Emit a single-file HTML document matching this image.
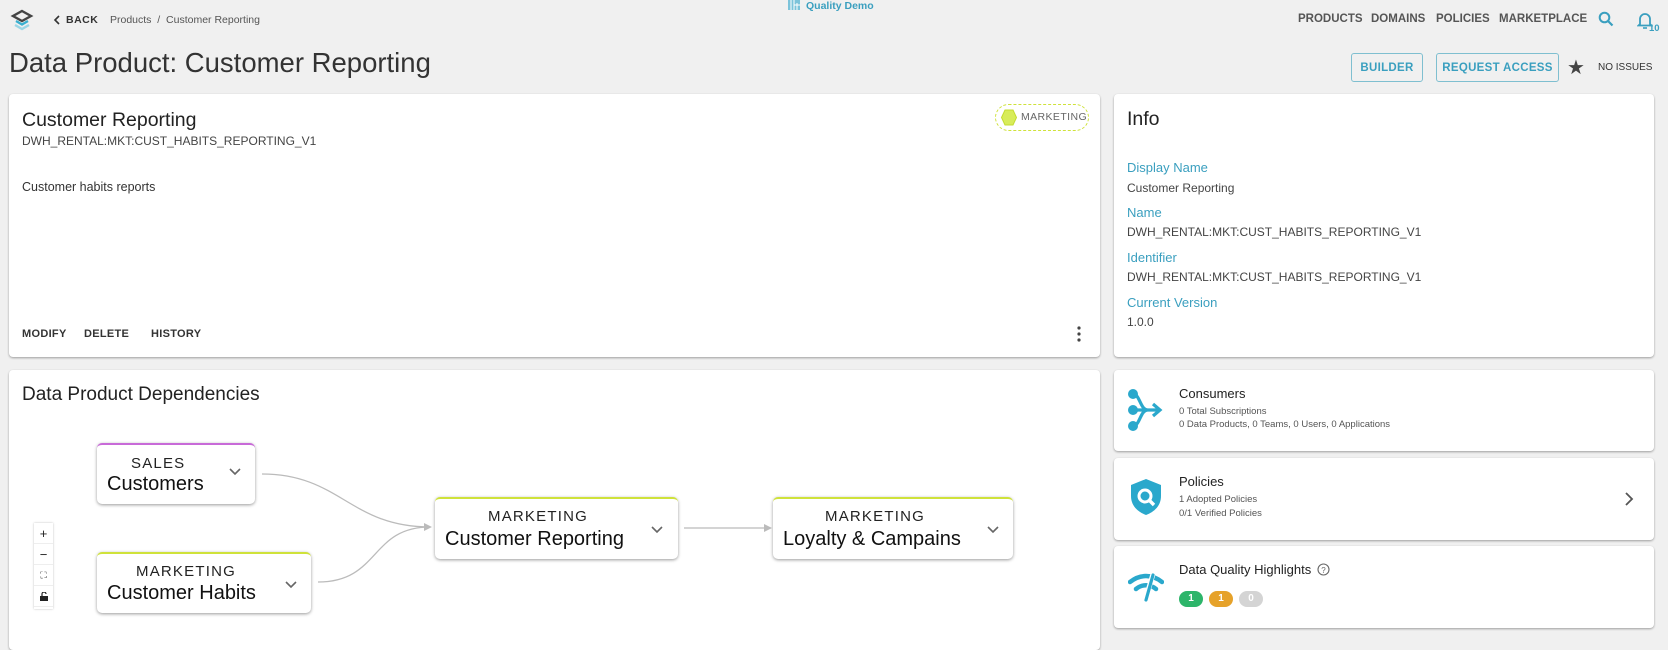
<!DOCTYPE html>
<html><head><meta charset="utf-8"><style>
*{margin:0;padding:0;box-sizing:border-box}
body{width:1668px;height:632px;overflow:hidden;background:#f0f0f0;font-family:"Liberation Sans",sans-serif;color:#333;position:relative}
.a{position:absolute;white-space:nowrap}
.card{position:absolute;background:#fff;border-radius:4px;box-shadow:0 1px 2px rgba(0,0,0,.35)}
.nav{font-size:11.5px;font-weight:bold;color:#555}
.btn{position:absolute;border:1px solid #7fbfd0;border-radius:3px;color:#3a9fbf;font-size:11.5px;font-weight:bold;display:flex;align-items:center;justify-content:center;letter-spacing:.3px}
.lbl{color:#3a9fbf;font-size:13px}
.val{color:#444;font-size:12px}
.node{position:absolute;background:#fff;border-radius:5px;box-shadow:0 1px 3px rgba(0,0,0,.4);border-top:2px solid #cfe23a}
.node .d{position:absolute;font-size:15px;letter-spacing:1.2px;color:#222}
.node .n{position:absolute;font-size:20px;color:#111}
.node svg{position:absolute}
.ctl{position:absolute;left:34px;width:19px;height:21px;background:#fff;border-bottom:1px solid #eee;font-size:13px;text-align:center;line-height:21px;color:#222}
.badge{position:absolute;top:591px;width:24px;height:16px;border-radius:8px;color:#fff;font-size:10px;font-weight:bold;text-align:center;line-height:16px}
</style></head><body>
<svg class="a" style="left:10px;top:9px" width="24" height="24" viewBox="0 0 24 24"><path d="M12 2 L21 7 L12 12 L3 7Z" fill="none" stroke="#444" stroke-width="2.4"/><path d="M6 12 L12 15.5 L18 12" fill="none" stroke="#3ab0d0" stroke-width="2.4"/><path d="M5 16 L12 20 L19 16" fill="none" stroke="#9ad6e6" stroke-width="2.4"/></svg>
<svg class="a" style="left:53px;top:15px" width="8" height="10"><path d="M6 1 L2 5 L6 9" fill="none" stroke="#333" stroke-width="1.6"/></svg>
<div class="a" style="left:66px;top:14px;font-size:10.5px;font-weight:bold;color:#333;letter-spacing:.5px">BACK</div>
<div class="a" style="left:110px;top:14px;font-size:10.5px;color:#555">Products &nbsp;/&nbsp; Customer Reporting</div>
<svg class="a" style="left:788px;top:0px" width="12" height="10"><rect x="0" y="0" width="12" height="10" fill="#7cc3da"/><path d="M3 0V10M6 0V10M9 3V10M6 5H12" stroke="#fff" stroke-width="1"/></svg>
<div class="a" style="left:806px;top:0px;font-size:10.5px;font-weight:bold;color:#3a9fbf">Quality Demo</div>
<div class="a nav" style="left:1298px;top:13px">PRODUCTS</div>
<div class="a nav" style="left:1371px;top:13px">DOMAINS</div>
<div class="a nav" style="left:1436px;top:13px">POLICIES</div>
<div class="a nav" style="left:1499px;top:13px">MARKETPLACE</div>
<svg class="a" style="left:1598px;top:11px" width="16" height="16"><circle cx="6.5" cy="6.5" r="4.8" fill="none" stroke="#3a9fbf" stroke-width="2"/><path d="M10 10 L14.5 14.5" stroke="#3a9fbf" stroke-width="2.2"/></svg>
<svg class="a" style="left:1637px;top:11px" width="16" height="18"><path d="M3 13 V8 A5 5 0 0 1 13 8 V13 L14.5 14.5 H1.5Z" fill="none" stroke="#3a9fbf" stroke-width="1.8"/><path d="M6 17 H10" stroke="#3a9fbf" stroke-width="1.6"/></svg>
<div class="a" style="left:1649px;top:23px;font-size:9.5px;color:#3a9fbf;font-weight:bold">10</div>
<div class="a" style="left:9px;top:47px;font-size:27.5px;color:#333">Data Product: Customer Reporting</div>
<div class="btn" style="left:1351px;top:53px;width:72px;height:29px">BUILDER</div>
<div class="btn" style="left:1436px;top:53px;width:123px;height:29px">REQUEST ACCESS</div>
<div class="a" style="left:1567px;top:55px;font-size:20px;color:#444">★</div>
<div class="a" style="left:1598px;top:62px;font-size:10px;color:#333">NO ISSUES</div>

<div class="card" style="left:9px;top:94px;width:1091px;height:263px">
  <div class="a" style="left:13px;top:15px;font-size:19.5px;color:#222">Customer Reporting</div>
  <div class="a" style="left:13px;top:40px;font-size:12px;color:#444">DWH_RENTAL:MKT:CUST_HABITS_REPORTING_V1</div>
  <div class="a" style="left:13px;top:86px;font-size:12.5px;color:#333">Customer habits reports</div>
  <div class="a" style="left:13px;top:234px;font-size:11px;font-weight:bold;color:#333;letter-spacing:.3px">MODIFY</div>
  <div class="a" style="left:75px;top:234px;font-size:11px;font-weight:bold;color:#333;letter-spacing:.3px">DELETE</div>
  <div class="a" style="left:142px;top:234px;font-size:11px;font-weight:bold;color:#333;letter-spacing:.3px">HISTORY</div>
  <svg class="a" style="left:1067px;top:232px" width="6" height="16"><circle cx="3" cy="2" r="1.6" fill="#444"/><circle cx="3" cy="8" r="1.6" fill="#444"/><circle cx="3" cy="14" r="1.6" fill="#444"/></svg>
  <div class="a" style="left:986px;top:10px;width:94px;height:27px;border:1px dashed #cfe23a;border-radius:14px"></div>
  <svg class="a" style="left:992px;top:15px" width="16" height="17"><path d="M4 1 H12 L15.5 8.5 L12 16 H4 L0.5 8.5Z" fill="#d8ec5a" stroke="#c4dc30"/></svg>
  <div class="a" style="left:1012px;top:17px;font-size:10.5px;color:#666;letter-spacing:.4px">MARKETING</div>
</div>

<div class="card" style="left:1114px;top:94px;width:540px;height:263px">
  <div class="a" style="left:13px;top:14px;font-size:19.5px;color:#222">Info</div>
  <div class="a lbl" style="left:13px;top:66px">Display Name</div>
  <div class="a val" style="left:13px;top:87px">Customer Reporting</div>
  <div class="a lbl" style="left:13px;top:111px">Name</div>
  <div class="a val" style="left:13px;top:131px">DWH_RENTAL:MKT:CUST_HABITS_REPORTING_V1</div>
  <div class="a lbl" style="left:13px;top:156px">Identifier</div>
  <div class="a val" style="left:13px;top:176px">DWH_RENTAL:MKT:CUST_HABITS_REPORTING_V1</div>
  <div class="a lbl" style="left:13px;top:201px">Current Version</div>
  <div class="a val" style="left:13px;top:221px">1.0.0</div>
</div>

<div class="card" style="left:9px;top:370px;width:1091px;height:280px">
  <div class="a" style="left:13px;top:14px;font-size:19px;color:#222">Data Product Dependencies</div>
</div>
<svg class="a" style="left:0;top:0" width="1100" height="632">
  <path d="M262 474 C340 474,350 527,430 527" fill="none" stroke="#bbb" stroke-width="1.3"/>
  <path d="M318 582 C380 582,370 527,430 527" fill="none" stroke="#bbb" stroke-width="1.3"/>
  <path d="M424 523 L432 527 L424 531Z" fill="#bbb"/>
  <path d="M684 528 L764 528" stroke="#bbb" stroke-width="1.3"/>
  <path d="M764 524 L772 528 L764 532Z" fill="#bbb"/>
</svg>
<div class="node" style="left:97px;top:443px;width:158px;height:61px;border-top-color:#c86ad8">
  <div class="d" style="left:34px;top:10px">SALES</div><div class="n" style="left:10px;top:28px">Customers</div>
  <svg style="left:132px;top:23px" width="12" height="8"><path d="M1 1 L6 6 L11 1" fill="none" stroke="#666" stroke-width="1.6"/></svg>
</div>
<div class="node" style="left:97px;top:552px;width:214px;height:61px">
  <div class="d" style="left:39px;top:9px">MARKETING</div><div class="n" style="left:10px;top:28px">Customer Habits</div>
  <svg style="left:188px;top:27px" width="12" height="8"><path d="M1 1 L6 6 L11 1" fill="none" stroke="#666" stroke-width="1.6"/></svg>
</div>
<div class="node" style="left:435px;top:497px;width:243px;height:62px">
  <div class="d" style="left:53px;top:9px">MARKETING</div><div class="n" style="left:10px;top:29px">Customer Reporting</div>
  <svg style="left:216px;top:27px" width="12" height="8"><path d="M1 1 L6 6 L11 1" fill="none" stroke="#666" stroke-width="1.6"/></svg>
</div>
<div class="node" style="left:773px;top:497px;width:240px;height:62px">
  <div class="d" style="left:52px;top:9px">MARKETING</div><div class="n" style="left:10px;top:29px">Loyalty &amp; Campains</div>
  <svg style="left:214px;top:27px" width="12" height="8"><path d="M1 1 L6 6 L11 1" fill="none" stroke="#666" stroke-width="1.6"/></svg>
</div>
<div style="position:absolute;left:34px;top:523px;width:19px;height:86px;box-shadow:0 0 2px rgba(0,0,0,.25)"></div>
<div class="ctl" style="top:523px">+</div>
<div class="ctl" style="top:544px">−</div>
<div class="ctl" style="top:565px;font-size:9px">⛶</div>
<div class="ctl" style="top:586px"><svg width="8" height="9" style="margin-top:6px"><rect x="0" y="4" width="8" height="5" fill="#222"/><path d="M2 4 V2 A2 2 0 0 1 6 2" fill="none" stroke="#222" stroke-width="1.2"/></svg></div>

<div class="card" style="left:1114px;top:370px;width:540px;height:81px">
  <svg class="a" style="left:12px;top:18px" width="38" height="44" viewBox="0 0 38 44"><circle cx="7" cy="6" r="5" fill="#2aa8cc"/><circle cx="7" cy="22" r="5" fill="#2aa8cc"/><circle cx="7" cy="38" r="5" fill="#2aa8cc"/><path d="M7 6 C14 6,14 22,22 22 M7 38 C14 38,14 22,22 22 M7 22 H34 M27 16 L34 22 L27 28" fill="none" stroke="#2aa8cc" stroke-width="3.2"/></svg>
  <div class="a" style="left:65px;top:16px;font-size:13px;color:#222">Consumers</div>
  <div class="a" style="left:65px;top:36px;font-size:9.5px;color:#555">0 Total Subscriptions</div>
  <div class="a" style="left:65px;top:49px;font-size:9.5px;color:#555">0 Data Products, 0 Teams, 0 Users, 0 Applications</div>
</div>
<div class="card" style="left:1114px;top:458px;width:540px;height:82px">
  <svg class="a" style="left:16px;top:20px" width="32" height="38" viewBox="0 0 32 38"><path d="M16 1 L31 7 V18 C31 28,24 34,16 37 C8 34,1 28,1 18 V7Z" fill="#2aa8cc"/><circle cx="15" cy="18" r="6" fill="none" stroke="#fff" stroke-width="3"/><path d="M19 22 L24 27" stroke="#fff" stroke-width="3.4"/></svg>
  <div class="a" style="left:65px;top:16px;font-size:13px;color:#222">Policies</div>
  <div class="a" style="left:65px;top:36px;font-size:9.5px;color:#555">1 Adopted Policies</div>
  <div class="a" style="left:65px;top:50px;font-size:9.5px;color:#555">0/1 Verified Policies</div>
  <svg class="a" style="left:510px;top:33px" width="10" height="16"><path d="M2 2 L8 8 L2 14" fill="none" stroke="#555" stroke-width="1.8"/></svg>
</div>
<div class="card" style="left:1114px;top:546px;width:540px;height:82px">
  <svg class="a" style="left:14px;top:24px" width="36" height="34" viewBox="0 0 36 34"><path d="M2 12 C12 4,24 4,34 12" fill="none" stroke="#2aa8cc" stroke-width="4.5" stroke-linecap="round"/><path d="M8 19 C14 14,22 14,28 19" fill="none" stroke="#2aa8cc" stroke-width="4.5" stroke-linecap="round"/><path d="M25 4 L17 31" stroke="#fff" stroke-width="5"/><path d="M25 5 L18 30" stroke="#2aa8cc" stroke-width="3.2" stroke-linecap="round"/></svg>
  <div class="a" style="left:65px;top:16px;font-size:13px;color:#222">Data Quality Highlights</div>
  <svg class="a" style="left:203px;top:17px" width="13" height="13"><circle cx="6.5" cy="6.5" r="5.5" fill="none" stroke="#666" stroke-width="1.1"/><text x="6.5" y="10" font-size="8" text-anchor="middle" fill="#666" font-family="Liberation Sans">?</text></svg>
</div>
<div class="badge" style="left:1179px;background:#2db56a">1</div>
<div class="badge" style="left:1209px;background:#e6a22a">1</div>
<div class="badge" style="left:1239px;background:#d4d4d4">0</div>
</body></html>
